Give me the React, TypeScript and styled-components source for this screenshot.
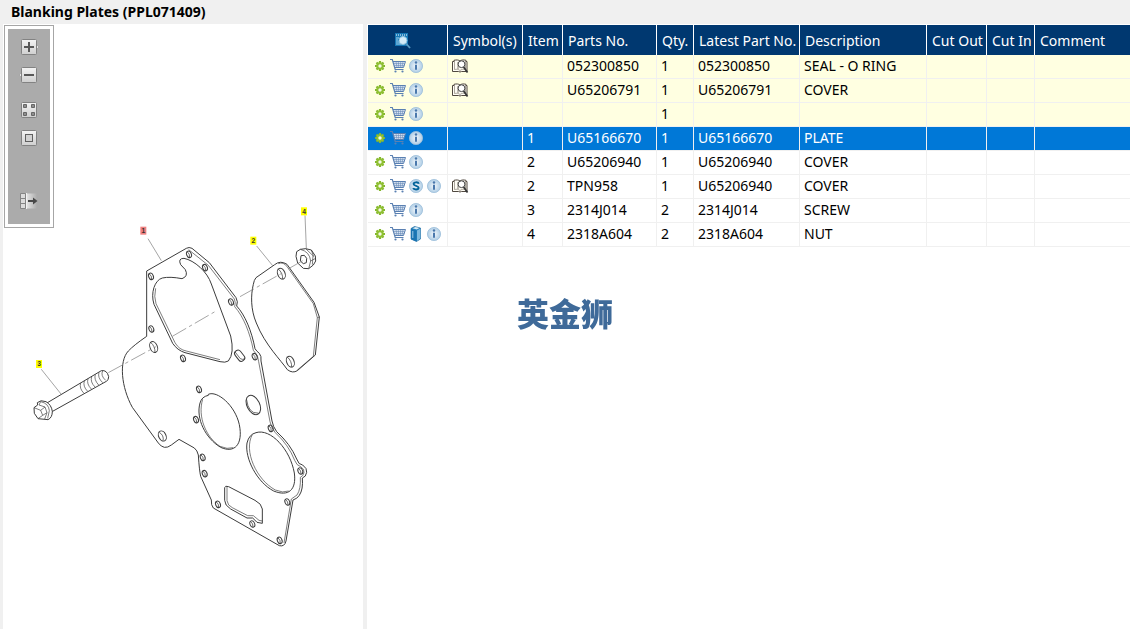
import React from "react";
import styled, { createGlobalStyle, css } from "styled-components";

const GlobalStyle = createGlobalStyle`
  *, *::before, *::after { box-sizing: border-box; }
  html, body, #root { height: 100%; }
  body {
    margin: 0;
    background: #f0f0f0;
    color: #000;
    font: 14px/20px "Noto Sans", "Open Sans", sans-serif;
  }
`;

const Page = styled.div`
  display: flex;
  flex-direction: column;
  min-height: 100%;
`;

const TitleBar = styled.header`
  height: 24px;
  padding: 0 11px;
`;

const Title = styled.h1`
  margin: 0;
  font-size: 14px;
  line-height: 24px;
  font-weight: 700;
`;

const Workspace = styled.main`
  flex: 1;
  display: grid;
  grid-template-columns: 360px minmax(0, 1fr);
  column-gap: 4px;
  padding-left: 3px;
`;

const DrawingPanel = styled.section`
  display: grid;
  align-items: start;
  justify-items: start;
  background: #fff;
`;

const Toolbar = styled.div`
  grid-area: 1 / 1;
  z-index: 1;
  margin: 1px;
  padding: 3px;
  border: 1px solid #a6a6a6;
  background: #fff;
`;

const ToolList = styled.div`
  display: flex;
  flex-direction: column;
  align-items: center;
  width: 42px;
  padding: 10px 0 15px;
  background: #ababab;
`;

const ToolGroup = styled.div`
  display: grid;
  gap: 12px;
  & + & { margin-top: 19px; }
  &:last-child { margin-top: 47px; }
`;

const IconButton = styled.button`
  display: block;
  width: 16px;
  height: 16px;
  padding: 0;
  border: 0;
  background: none;
  cursor: pointer;
  svg { display: block; width: 16px; height: 16px; overflow: visible; }
`;

const Drawing = styled.svg`
  grid-area: 1 / 1;
  display: block;
  width: 360px;
  height: 560px;
  fill: none;
  stroke: #3c3c3c;
  stroke-width: 3;
  stroke-linejoin: round;
  text {
    font: 700 20px "Liberation Sans", sans-serif;
    fill: #333;
    stroke: none;
    text-anchor: middle;
  }
`;

const PartsPanel = styled.section`
  padding: 1px 0 0 1px;
  background: #fff;
`;

const PartsTable = styled.table`
  width: 100%;
  table-layout: fixed;
  border-collapse: separate;
  border-spacing: 0;
`;

const HeadCell = styled.th<{ $center?: boolean }>`
  height: 30px;
  padding: 2px 0 0 5px;
  border-right: 1px solid #fff;
  background: #003870;
  color: #fff;
  font-weight: 400;
  text-align: left;
  white-space: nowrap;
  &:last-child { border-right: 0; }
  ${(p) => p.$center && css`
    padding: 0 10px 0 0;
    button { margin: 0 auto; }
  `}
`;

const Cell = styled.td`
  height: 24px;
  padding: 0 0 2px 4px;
  border-right: 1px solid #f0f0f0;
  border-bottom: 1px solid #f0f0f0;
  white-space: nowrap;
  &:last-child { border-right: 0; }
`;

type Tone = "plain" | "related" | "selected";

const tones = {
  plain: css`background: #fff;`,
  related: css`background: #ffffe1;`,
  selected: css`background: #0078d7; color: #fff;`,
};

const Row = styled.tr<{ $tone: Tone }>`
  ${(p) => tones[p.$tone]}
`;

const Actions = styled.div`
  display: flex;
  gap: 2px;
`;

const Watermark = styled.div`
  position: fixed;
  inset: 0;
  display: grid;
  place-items: center;
  padding-bottom: 6px;
  pointer-events: none;
  color: #3f6a99;
  font: 900 32px/32px "Noto Sans CJK SC", sans-serif;
`;

const Tile = () => (
  <rect x="0.5" y="0.5" width="15" height="15" rx="1" fill="url(#tile)" stroke="#828282" />
);

const ExpandIcon = () => (
  <svg viewBox="0 0 16 16">
    <path d="M15 5l3 3-3 3z" fill="#e6e6e6" stroke="#909090" strokeWidth="0.6" />
    <Tile />
    <path d="M3 8h10M8 3v10" stroke="#585858" strokeWidth="2" />
  </svg>
);

const CollapseIcon = () => (
  <svg viewBox="0 0 16 16">
    <path d="M1 5l-3 3 3 3z" fill="#e6e6e6" stroke="#909090" strokeWidth="0.6" />
    <Tile />
    <path d="M3 8h10" stroke="#585858" strokeWidth="2" />
  </svg>
);

const GridIcon = () => (
  <svg viewBox="0 0 16 16">
    <Tile />
    <path d="M2.5 2.5h3v3h-3zM10.5 2.5h3v3h-3zM2.5 10.5h3v3h-3zM10.5 10.5h3v3h-3z" fill="#8e8e8e" stroke="#666" />
  </svg>
);

const FitIcon = () => (
  <svg viewBox="0 0 16 16">
    <Tile />
    <rect x="4.5" y="4.5" width="7" height="7" fill="#d2d2d2" stroke="#606060" />
  </svg>
);

const ExportIcon = () => (
  <svg viewBox="0 0 16 16">
    <path d="M5 .5h11v15H5z" fill="url(#fade)" />
    <path d="M-.5 .5h5v15h-5zM-.5 5.5h5M-.5 10.5h5" fill="#dcdcdc" stroke="#858585" />
    <path d="M5.5 0v16" stroke="#f2f2f2" />
    <path d="M7 8h6" stroke="#484848" strokeWidth="2" />
    <path d="M12 4.5L16.5 8 12 11.5z" fill="#484848" />
  </svg>
);

const GearIcon = () => (
  <svg viewBox="0 0 16 16">
    <g stroke="#83b62c" strokeWidth="2.2">
      <path d="M8 3v10M3 8h10M4.5 4.5l7 7M11.5 4.5l-7 7" />
    </g>
    <circle cx="8" cy="8" r="3.8" fill="#8fc032" />
    <circle cx="8" cy="8" r="1.7" fill="#f5fae8" />
  </svg>
);

const CartIcon = () => (
  <svg viewBox="0 0 16 16" fill="none" stroke="#5a80b2">
    <path d="M3 3h12.500l-2 6.500H5z" fill="#d5e1f0" stroke="none" />
    <path d="M0 1.500h2.300L5.200 11.500h8.300" strokeWidth="1.200" />
    <path d="M3 3.500h12.500L13.500 9.500H5" strokeWidth="1" />
    <path d="M3.500 5.500h11M4.300 7.500h10M6 3.500l1 6M8.300 3.500l.4 6M10.700 3.500l-.3 6M13 3.500l-1 6" strokeWidth="0.500" />
    <circle cx="5.500" cy="13.500" r="1.100" fill="#5a80b2" stroke="none" />
    <circle cx="12.500" cy="13.500" r="1.100" fill="#5a80b2" stroke="none" />
  </svg>
);

const Disc = () => <circle cx="8" cy="8" r="6.6" fill="url(#disc)" stroke="#9dbfda" strokeWidth="0.8" />;

const InfoIcon = () => (
  <svg viewBox="0 0 16 16">
    <Disc />
    <path d="M8 6.700v5" stroke="#4a78ac" strokeWidth="2" />
    <circle cx="8" cy="4.500" r="1.200" fill="#4a78ac" />
  </svg>
);

const SupersedeIcon = () => (
  <svg viewBox="0 0 16 16">
    <Disc />
    <path d="M10.800 5.700C10.300 3.800 5.600 3.800 5.600 6.100c0 2.200 5 1.400 5 3.700 0 2.300-4.800 2.300-5.400.3" fill="none" stroke="#00639a" strokeWidth="1.900" />
  </svg>
);

const BookIcon = () => (
  <svg viewBox="0 0 16 16">
    <path d="M3 2.500L6.500.5l6 1.500v11L8.500 15.500 3 13z" fill="#2481bd" stroke="#12639b" strokeWidth="0.600" />
    <path d="M4.500 2.200L7.500 1l4 1-2.700 1.500z" fill="#d8ebf6" />
    <path d="M9 4.500L12.300 2.800v9.700L9 15z" fill="#7fb9de" />
    <path d="M3 3l5.500 1.500v11L3 13.200z" fill="#1a74b2" />
    <path d="M4.800 5v7" stroke="#9fcbe8" />
  </svg>
);

const LookupIcon = () => (
  <svg viewBox="0 0 16 16">
    <path d="M.5 3.500H2V2.300c2.500-.6 4.500-.5 6 .7 1.500-1.200 3.500-1.300 6-.7v1.200h1v10H9.500L8 14l-1.500-.5h-6z" fill="#fffdf5" stroke="#504840" />
    <path d="M2.500 3v8.500c2.500-.5 4-.2 5.500 1 1.500-1.200 3-1.500 5.500-1V3" fill="none" stroke="#8a8278" strokeWidth="0.700" />
    <path d="M6 4v7" stroke="#665e54" strokeWidth="0.800" />
    <circle cx="9.500" cy="6.200" r="3.400" fill="#fff" stroke="#444" />
    <path d="M11.600 9l3.900 5.500" stroke="#333" strokeWidth="1.700" />
  </svg>
);

const SearchListIcon = () => (
  <svg viewBox="0 0 16 16">
    <path d="M0 1h13v13H0z" fill="#1577b5" />
    <path d="M1 3h11" stroke="#fff" strokeWidth="1" strokeDasharray="1 1" />
    <path d="M1 6h3M1 8h2M1 10h3M1 12h5" stroke="#a8d6f0" />
    <circle cx="8" cy="8.500" r="4" fill="#d6ecf8" stroke="#8cc2e0" />
    <path d="M11 11.500l4 4.500" stroke="#5b9cc4" strokeWidth="1.800" />
  </svg>
);

const icons = {
  gear: { label: "Options", Icon: GearIcon },
  cart: { label: "Add to cart", Icon: CartIcon },
  super: { label: "Supersession", Icon: SupersedeIcon },
  book: { label: "Catalogue", Icon: BookIcon },
  info: { label: "Information", Icon: InfoIcon },
  lookup: { label: "Look up", Icon: LookupIcon },
};

type IconName = keyof typeof icons;

const ActionButton = ({ name }: { name: IconName }) => {
  const { label, Icon } = icons[name];
  return (
    <IconButton type="button" aria-label={label}>
      <Icon />
    </IconButton>
  );
};

const Defs = () => (
  <defs>
    <linearGradient id="tile" x1="0" y1="0" x2="0" y2="1">
      <stop offset="0" stopColor="#f4f4f4" />
      <stop offset="1" stopColor="#cfcfcf" />
    </linearGradient>
    <linearGradient id="fade">
      <stop offset="0" stopColor="#e8e8e8" />
      <stop offset="1" stopColor="#ababab" />
    </linearGradient>
    <radialGradient id="disc">
      <stop offset="0" stopColor="#f3f8fc" />
      <stop offset="1" stopColor="#afcde5" />
    </radialGradient>
  </defs>
);

const Hole = ({ x, y, rx = 7, ry = 10 }: { x: number; y: number; rx?: number; ry?: number }) => (
  <g transform={`translate(${x} ${y}) rotate(-22)`}>
    <ellipse rx={rx} ry={ry} />
    <path d={`M${-rx / 3} ${-ry}Q${rx / 2} 0 ${-rx / 4} ${ry}`} strokeWidth="2" />
  </g>
);

const Callout = ({ x, y, n, active }: { x: number; y: number; n: number; active?: boolean }) => (
  <g>
    <rect x={x - 9} y={y - 12} width="18" height="24" fill={active ? "#f08080" : "#ffff00"} stroke="none" />
    <text x={x} y={y + 7}>{n}</text>
  </g>
);

const plateHoles = [
  [237, 58], [285, 98], [123, 124], [363, 201], [124, 282], [219, 370], [434, 365],
  [267, 463], [258, 554], [278, 667], [284, 716], [324, 808], [427, 867], [509, 916],
  [532, 801], [571, 708], [482, 580],
];

const ExplodedView = () => (
  <Drawing viewBox="9 72 1080 1680" role="img" aria-label="Exploded view of blanking plates">
    <Defs />
    <g transform="translate(330 705)">
      <path d="M110 108L229 40Q237 35 246 40L298 83L378 188Q385 200 380 213C405 240 425 288 435 341Q440 349 448 355Q455 363 453 378L486 558Q489 575 500 590Q541 627 560 672Q566 690 578 690Q592 700 590 712Q588 726 577 729Q580 763 568 781Q562 791 549 795L528 918Q524 936 508 932L310 819Q303 811 304 795L272 724Q268 707 265 660Q262 646 253 639L207 613L184 630Q162 647 145 624L67 517C34 457 26 379 55 348Q72 330 110 304Z" />
      <path d="M236 44L295 91L373 192Q378 202 374 215C400 244 420 293 430 346Q446 360 446 380L480 560Q484 580 496 593Q536 630 554 676Q560 692 572 695Q584 702 582 713Q580 723 571 727Q573 762 561 780L544 792L522 924" strokeWidth="2" />
      <path d="M212 89Q203 70 222 70C253 76 292 110 304 147L362 303Q374 355 355 378Q346 384 330 380L225 353Q202 346 188 325L132 208C121 174 134 135 157 129Q180 124 216 131Q236 124 226 104Z" />
      <path d="M137 160Q131 185 138 206L195 323Q207 344 229 348L330 374" strokeWidth="2" />
      {plateHoles.map(([x, y]) => <Hole key={`${x}-${y}`} x={x} y={y} />)}
      <Hole x={131} y={336} rx={11} ry={17} />
      <g transform="translate(389 362) rotate(-38)"><rect x="-10" y="-18" width="20" height="36" rx="9" /><path d="M-4 -17V8Q-2 15 6 17" strokeWidth="2" /></g>
      <g transform="translate(157 603) rotate(-25)"><ellipse rx="11" ry="16" /><path d="M-4 -14Q6 0-4 14" strokeWidth="2" /></g>
      <path d="M295 478C321 466 375 510 388 569C400 629 373 656 332 637C286 610 257 550 270 504Q275 485 295 481Z" />
      <path d="M278 493C262 545 288 607 330 634Q352 644 370 638" strokeWidth="2" />
      <g transform="translate(430 510) rotate(-26)"><ellipse rx="19" ry="31" /><path d="M-11 -24Q-25 17 2 28" strokeWidth="2" /></g>
      <path d="M438 593C482 579 541 644 553 714C560 765 535 786 491 768C441 742 404 670 411 624Q417 598 438 593Z" />
      <path d="M427 599C400 647 439 734 496 765Q519 775 536 768" strokeWidth="2" />
      <path d="M344 758Q345 751 356 755L435 796Q455 806 457 822V865L441 862L428 849L411 849L362 822Q344 811 344 796Z" />
      <path d="M351 755V797Q353 812 367 818L413 842L430 842L447 856L457 858" strokeWidth="2" />
    </g>
    <g transform="translate(690 585)">
      <path d="M78 248L134 209Q151 195 171 208L252 322L268 366L256 480L202 527Q188 536 172 524C154 497 105 450 79 384C62 344 62 301 70 268Q72 255 78 248Z" />
      <path d="M145 206Q160 199 172 216L250 326L262 368L268 366M262 368L250 484L201 526" strokeWidth="2" />
      <Hole x={154} y={236} rx={11} ry={17} />
      <Hole x={181} y={500} rx={11} ry={17} />
      <path d="M211 163L227 161L244 165L256 183L257 198L250 210L236 221L220 220L203 204L198 184L200 170Z" />
      <path d="M211 163Q239 170 242 198L236 221M227 161L249 182L247 209M244 165L251 185M242 198L257 190" strokeWidth="2" />
      <path d="M213 182L223 181L230 190L229 203L220 206L211 198Z" />
    </g>
    <g transform="translate(60 1050)">
      <path d="M79 160L244 62Q261 59 266 80Q266 91 259 94L96 185" />
      <path d="M248 62Q241 77 257 91M237 67Q232 83 248 98M226 73Q221 89 236 105M215 80Q210 96 225 111M204 86Q199 102 214 117M193 93Q188 109 203 124M182 99Q177 115 192 130" strokeWidth="2" />
      <path d="M52 158Q62 148 78 155Q94 164 97 184Q97 203 84 209L54 206L43 190L42 173L53 165Z" fill="#fff" />
      <path d="M57 165L62 155Q86 160 88 182L83 205M57 165L75 171L81 188L74 207M42 173L62 181L68 196L54 206M62 181L75 171M68 196L81 188" strokeWidth="2" />
    </g>
    <g stroke="#777" strokeWidth="2">
      <path d="M444 716L484 782M770 738L818 797M915 646L919 745M124 1108L183 1182" />
      <path d="M325 1118L468 1040" strokeDasharray="48 10 10 10" />
      <path d="M517 1009L650 932" strokeDasharray="48 10 10 10" />
      <path d="M720 890L845 820M866 806L908 782" strokeDasharray="48 10 10 10" />
    </g>
    <Callout x={430} y={692} n={1} active />
    <Callout x={760} y={722} n={2} />
    <Callout x={912} y={634} n={4} />
    <Callout x={117} y={1092} n={3} />
  </Drawing>
);

interface Part {
  tone: Tone;
  extra?: IconName;
  symbol?: boolean;
  item?: string;
  part?: string;
  qty: string;
  latest?: string;
  description?: string;
}

const parts: Part[] = [
  { tone: "related", symbol: true, part: "052300850", qty: "1", latest: "052300850", description: "SEAL - O RING" },
  { tone: "related", symbol: true, part: "U65206791", qty: "1", latest: "U65206791", description: "COVER" },
  { tone: "related", qty: "1" },
  { tone: "selected", item: "1", part: "U65166670", qty: "1", latest: "U65166670", description: "PLATE" },
  { tone: "plain", item: "2", part: "U65206940", qty: "1", latest: "U65206940", description: "COVER" },
  { tone: "plain", extra: "super", symbol: true, item: "2", part: "TPN958", qty: "1", latest: "U65206940", description: "COVER" },
  { tone: "plain", item: "3", part: "2314J014", qty: "2", latest: "2314J014", description: "SCREW" },
  { tone: "plain", extra: "book", item: "4", part: "2318A604", qty: "2", latest: "2318A604", description: "NUT" },
];

const Col = styled.col<{ $width?: number }>`
  width: ${(p) => (p.$width ? `${p.$width}px` : "auto")};
`;

const columns: { title: string; width?: number }[] = [
  { title: "Symbol(s)", width: 75 },
  { title: "Item", width: 40 },
  { title: "Parts No.", width: 94 },
  { title: "Qty.", width: 37 },
  { title: "Latest Part No.", width: 106 },
  { title: "Description", width: 127 },
  { title: "Cut Out", width: 60 },
  { title: "Cut In", width: 48 },
  { title: "Comment" },
];

export default function App() {
  return (
    <Page>
      <GlobalStyle />
      <TitleBar>
        <Title>Blanking Plates (PPL071409)</Title>
      </TitleBar>
      <Workspace>
        <DrawingPanel>
          <Toolbar role="toolbar" aria-label="Drawing tools">
            <ToolList>
              <ToolGroup>
                <IconButton type="button" aria-label="Zoom in"><ExpandIcon /></IconButton>
                <IconButton type="button" aria-label="Zoom out"><CollapseIcon /></IconButton>
              </ToolGroup>
              <ToolGroup>
                <IconButton type="button" aria-label="Fit to window"><GridIcon /></IconButton>
                <IconButton type="button" aria-label="Actual size"><FitIcon /></IconButton>
              </ToolGroup>
              <ToolGroup>
                <IconButton type="button" aria-label="Move panel"><ExportIcon /></IconButton>
              </ToolGroup>
            </ToolList>
          </Toolbar>
          <ExplodedView />
        </DrawingPanel>
        <PartsPanel>
          <PartsTable>
            <colgroup>
              <Col $width={80} />
              {columns.map((c) => <Col key={c.title} $width={c.width} />)}
            </colgroup>
            <thead>
              <tr>
                <HeadCell $center>
                  <IconButton type="button" aria-label="Search parts"><SearchListIcon /></IconButton>
                </HeadCell>
                {columns.map((c) => <HeadCell key={c.title}>{c.title}</HeadCell>)}
              </tr>
            </thead>
            <tbody>
              {parts.map((p, i) => (
                <Row key={i} $tone={p.tone}>
                  <Cell>
                    <Actions>
                      <ActionButton name="gear" />
                      <ActionButton name="cart" />
                      {p.extra && <ActionButton name={p.extra} />}
                      <ActionButton name="info" />
                    </Actions>
                  </Cell>
                  <Cell>{p.symbol && <ActionButton name="lookup" />}</Cell>
                  <Cell>{p.item}</Cell>
                  <Cell>{p.part}</Cell>
                  <Cell>{p.qty}</Cell>
                  <Cell>{p.latest}</Cell>
                  <Cell>{p.description}</Cell>
                  <Cell />
                  <Cell />
                  <Cell />
                </Row>
              ))}
            </tbody>
          </PartsTable>
        </PartsPanel>
      </Workspace>
      <Watermark>英金狮</Watermark>
    </Page>
  );
}
